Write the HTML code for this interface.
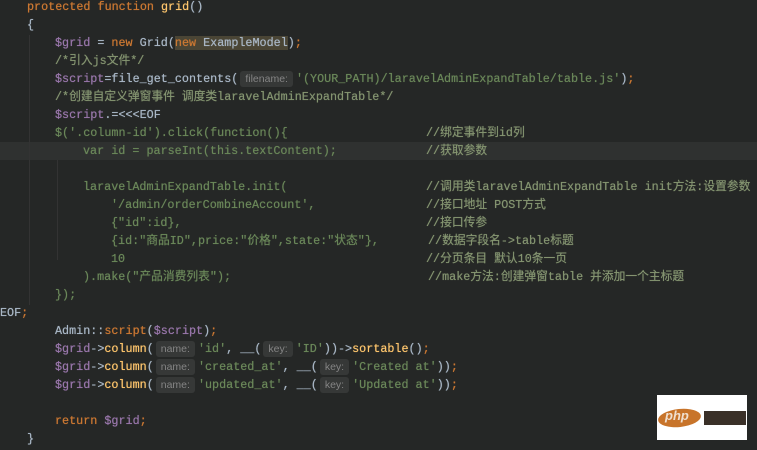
<!DOCTYPE html>
<html><head><meta charset="utf-8"><style>
body{margin:0;width:757px;height:450px;background:#252726;overflow:hidden;position:relative}
.l{position:absolute;left:0;height:18px;line-height:18px;white-space:pre;font-family:"Liberation Mono","Noto Sans CJK SC",monospace;font-size:11.75px;color:#a9b7c6;text-shadow:0 0 0.6px currentColor}
.k{color:#cc7832}.f{color:#ffc66d}.v{color:#9876aa}.s{color:#6a8759}.c{color:#849470}
.h{font-family:"Liberation Sans",sans-serif;font-size:10.5px;color:#858585;background:#363837;border-radius:3px;padding:2px 5px;margin:0 3px 0 2px;text-shadow:none}
.hl{position:absolute;left:0;width:757px;top:142px;height:18px;background:#2f3130}
.g{position:absolute;width:1px;background:#333}
</style></head><body>
<div class="hl"></div>
<div class="g" style="left:29px;top:35px;height:270px"></div>
<div class="g" style="left:57px;top:160px;height:100px"></div>
<div class="l" style="top:-2px;left:27px"><span class="k">protected function </span><span class="f">grid</span>()</div>
<div class="l" style="top:16px;left:27px">{</div>
<div class="l" style="top:34px;left:55px"><span class="v">$grid</span> = <span class="k">new </span>Grid(<span style="background:#4a4535"><span class="k">new </span>ExampleModel</span>)<span class="k">;</span></div>
<div class="l" style="top:52px;left:55px"><span class="c">/*引入js文件*/</span></div>
<div class="l" style="top:70px;left:55px"><span class="v">$script</span>=file_get_contents(<span class="h">filename:</span><span class="s">'(YOUR_PATH)/laravelAdminExpandTable/table.js'</span>)<span class="k">;</span></div>
<div class="l" style="top:88px;left:55px"><span class="c">/*创建自定义弹窗事件 调度类laravelAdminExpandTable*/</span></div>
<div class="l" style="top:106px;left:55px"><span class="v">$script</span>.=&lt;&lt;&lt;EOF</div>
<div class="l" style="top:124px;left:55px"><span class="s">$('.column-id').click(function(){</span></div>
<div class="l" style="top:142px;left:83px"><span class="s">var id = parseInt(this.textContent);</span></div>
<div class="l" style="top:178px;left:83px"><span class="s">laravelAdminExpandTable.init(</span></div>
<div class="l" style="top:196px;left:111px"><span class="s">'/admin/orderCombineAccount',</span></div>
<div class="l" style="top:214px;left:111px"><span class="s">{"id":id},</span></div>
<div class="l" style="top:232px;left:111px"><span class="s">{id:"商品ID",price:"价格",state:"状态"},</span></div>
<div class="l" style="top:250px;left:111px"><span class="s">10</span></div>
<div class="l" style="top:268px;left:83px"><span class="s">).make("产品消费列表");</span></div>
<div class="l" style="top:286px;left:55px"><span class="s">});</span></div>
<div class="l" style="top:124px;left:426px"><span class="c">//绑定事件到id列</span></div>
<div class="l" style="top:142px;left:426px"><span class="c">//获取参数</span></div>
<div class="l" style="top:178px;left:426px"><span class="c">//调用类laravelAdminExpandTable init方法:设置参数</span></div>
<div class="l" style="top:196px;left:426px"><span class="c">//接口地址 POST方式</span></div>
<div class="l" style="top:214px;left:426px"><span class="c">//接口传参</span></div>
<div class="l" style="top:232px;left:428px"><span class="c">//数据字段名-&gt;table标题</span></div>
<div class="l" style="top:250px;left:426px"><span class="c">//分页条目 默认10条一页</span></div>
<div class="l" style="top:268px;left:428px"><span class="c">//make方法:创建弹窗table 并添加一个主标题</span></div>
<div class="l" style="top:304px;left:0px">EOF<span class="k">;</span></div>
<div class="l" style="top:322px;left:55px">Admin::<span class="k">script</span>(<span class="v">$script</span>)<span class="k">;</span></div>
<div class="l" style="top:340px;left:55px"><span class="v">$grid</span>-&gt;<span class="f">column</span>(<span class="h">name:</span><span class="s">'id'</span>, __(<span class="h">key:</span><span class="s">'ID'</span>))-&gt;<span class="f">sortable</span>()<span class="k">;</span></div>
<div class="l" style="top:358px;left:55px"><span class="v">$grid</span>-&gt;<span class="f">column</span>(<span class="h">name:</span><span class="s">'created_at'</span>, __(<span class="h">key:</span><span class="s">'Created at'</span>))<span class="k">;</span></div>
<div class="l" style="top:376px;left:55px"><span class="v">$grid</span>-&gt;<span class="f">column</span>(<span class="h">name:</span><span class="s">'updated_at'</span>, __(<span class="h">key:</span><span class="s">'Updated at'</span>))<span class="k">;</span></div>
<div class="l" style="top:412px;left:55px"><span class="k">return </span><span class="v">$grid</span><span class="k">;</span></div>
<div class="l" style="top:430px;left:27px">}</div>
<div style="position:absolute;left:657px;top:395px;width:90px;height:45px;background:#fff">
<div style="position:absolute;left:1px;top:14px;width:43px;height:18px;background:#c8742a;border-radius:50%;transform:rotate(-6deg)"></div>
<div style="position:absolute;left:8px;top:13px;font:italic bold 13px 'Liberation Sans',sans-serif;color:#f0e0d0">php</div>
<div style="position:absolute;left:47px;top:16px;width:42px;height:14px;background:#3a3028"></div>
</div>
</body></html>
